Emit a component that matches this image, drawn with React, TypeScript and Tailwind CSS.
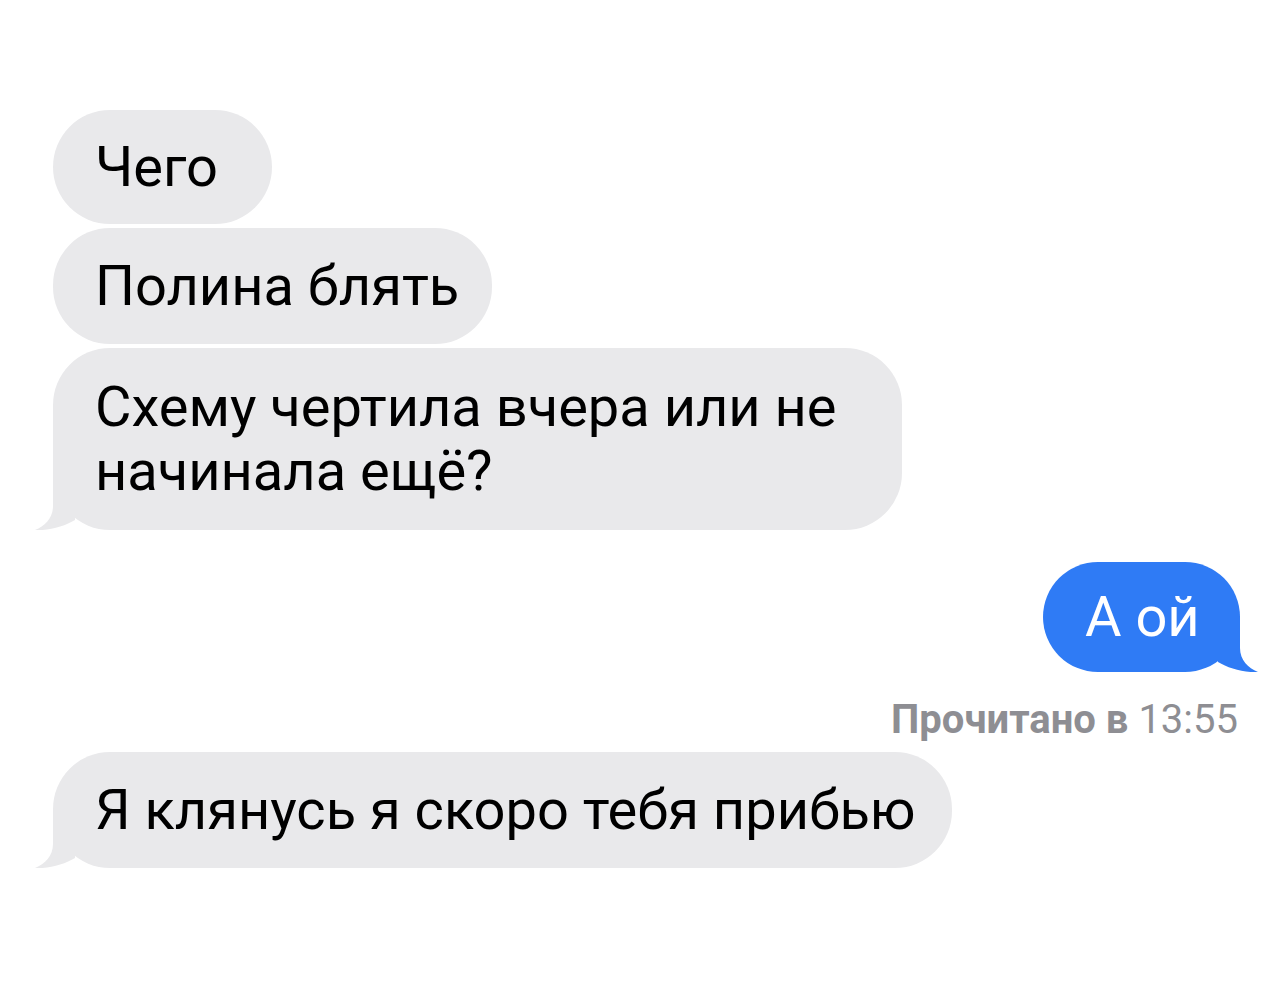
import React from "react";

const font = { fontFamily: "Roboto, 'Noto Sans', sans-serif" };

const TailLeft: React.FC = () => (
  <svg
    className="absolute bottom-0 left-[-18px]"
    width="44"
    height="56"
    viewBox="0 0 44 56"
  >
    <path
      d="M18 0 L18 32 C18 44 10 52 0 56 C14 57 30 52 40 46 L40 0 Z"
      fill="#e9e9eb"
    />
  </svg>
);

const TailRight: React.FC = () => (
  <svg
    className="absolute bottom-0 right-[-18px]"
    width="44"
    height="56"
    viewBox="0 0 44 56"
  >
    <path
      d="M26 0 L26 32 C26 44 34 52 44 56 C30 57 14 52 4 46 L4 0 Z"
      fill="#2f7bf5"
    />
  </svg>
);

const Grey: React.FC<{ text: React.ReactNode; tail?: boolean; cls: string }> = ({
  text,
  tail,
  cls,
}) => (
  <div className="relative self-start">
    <div
      className={`relative rounded-[57px] bg-[#e9e9eb] pl-[42px] text-[56px] leading-[64px] text-black ${cls}`}
    >
      {text}
    </div>
    {tail && <TailLeft />}
  </div>
);

export default function App() {
  return (
    <div className="min-h-[991px] w-[1280px] bg-white" style={font}>
      <div className="flex flex-col px-[53px] pt-[110px]">
        <div className="flex flex-col gap-1">
          <Grey cls="w-[219px] py-[25px]" text="Чего" />
          <Grey cls="w-[439px] py-[26px]" text="Полина блять" />
          <Grey
            tail
            cls="w-[849px] py-[27px]"
            text={
              <>
                Схему чертила вчера или не
                <br />
                начинала ещё?
              </>
            }
          />
        </div>

        <div className="mt-[32px] flex justify-end">
          <div className="relative mr-[-13px]">
            <div className="relative w-[197px] rounded-[55px] bg-[#2f7bf5] py-[23px] pl-[42px] text-[56px] leading-[64px] text-white">
              А ой
            </div>
            <TailRight />
          </div>
        </div>

        <div className="mr-[-11px] mt-[26px] text-right text-[40px] leading-[44px] text-[#8e8e93]">
          <span className="font-bold">Прочитано в</span> 13:55
        </div>

        <div className="mt-[10px] flex">
          <Grey tail cls="w-[899px] py-[26px]" text="Я клянусь я скоро тебя прибью" />
        </div>
      </div>
    </div>
  );
}
